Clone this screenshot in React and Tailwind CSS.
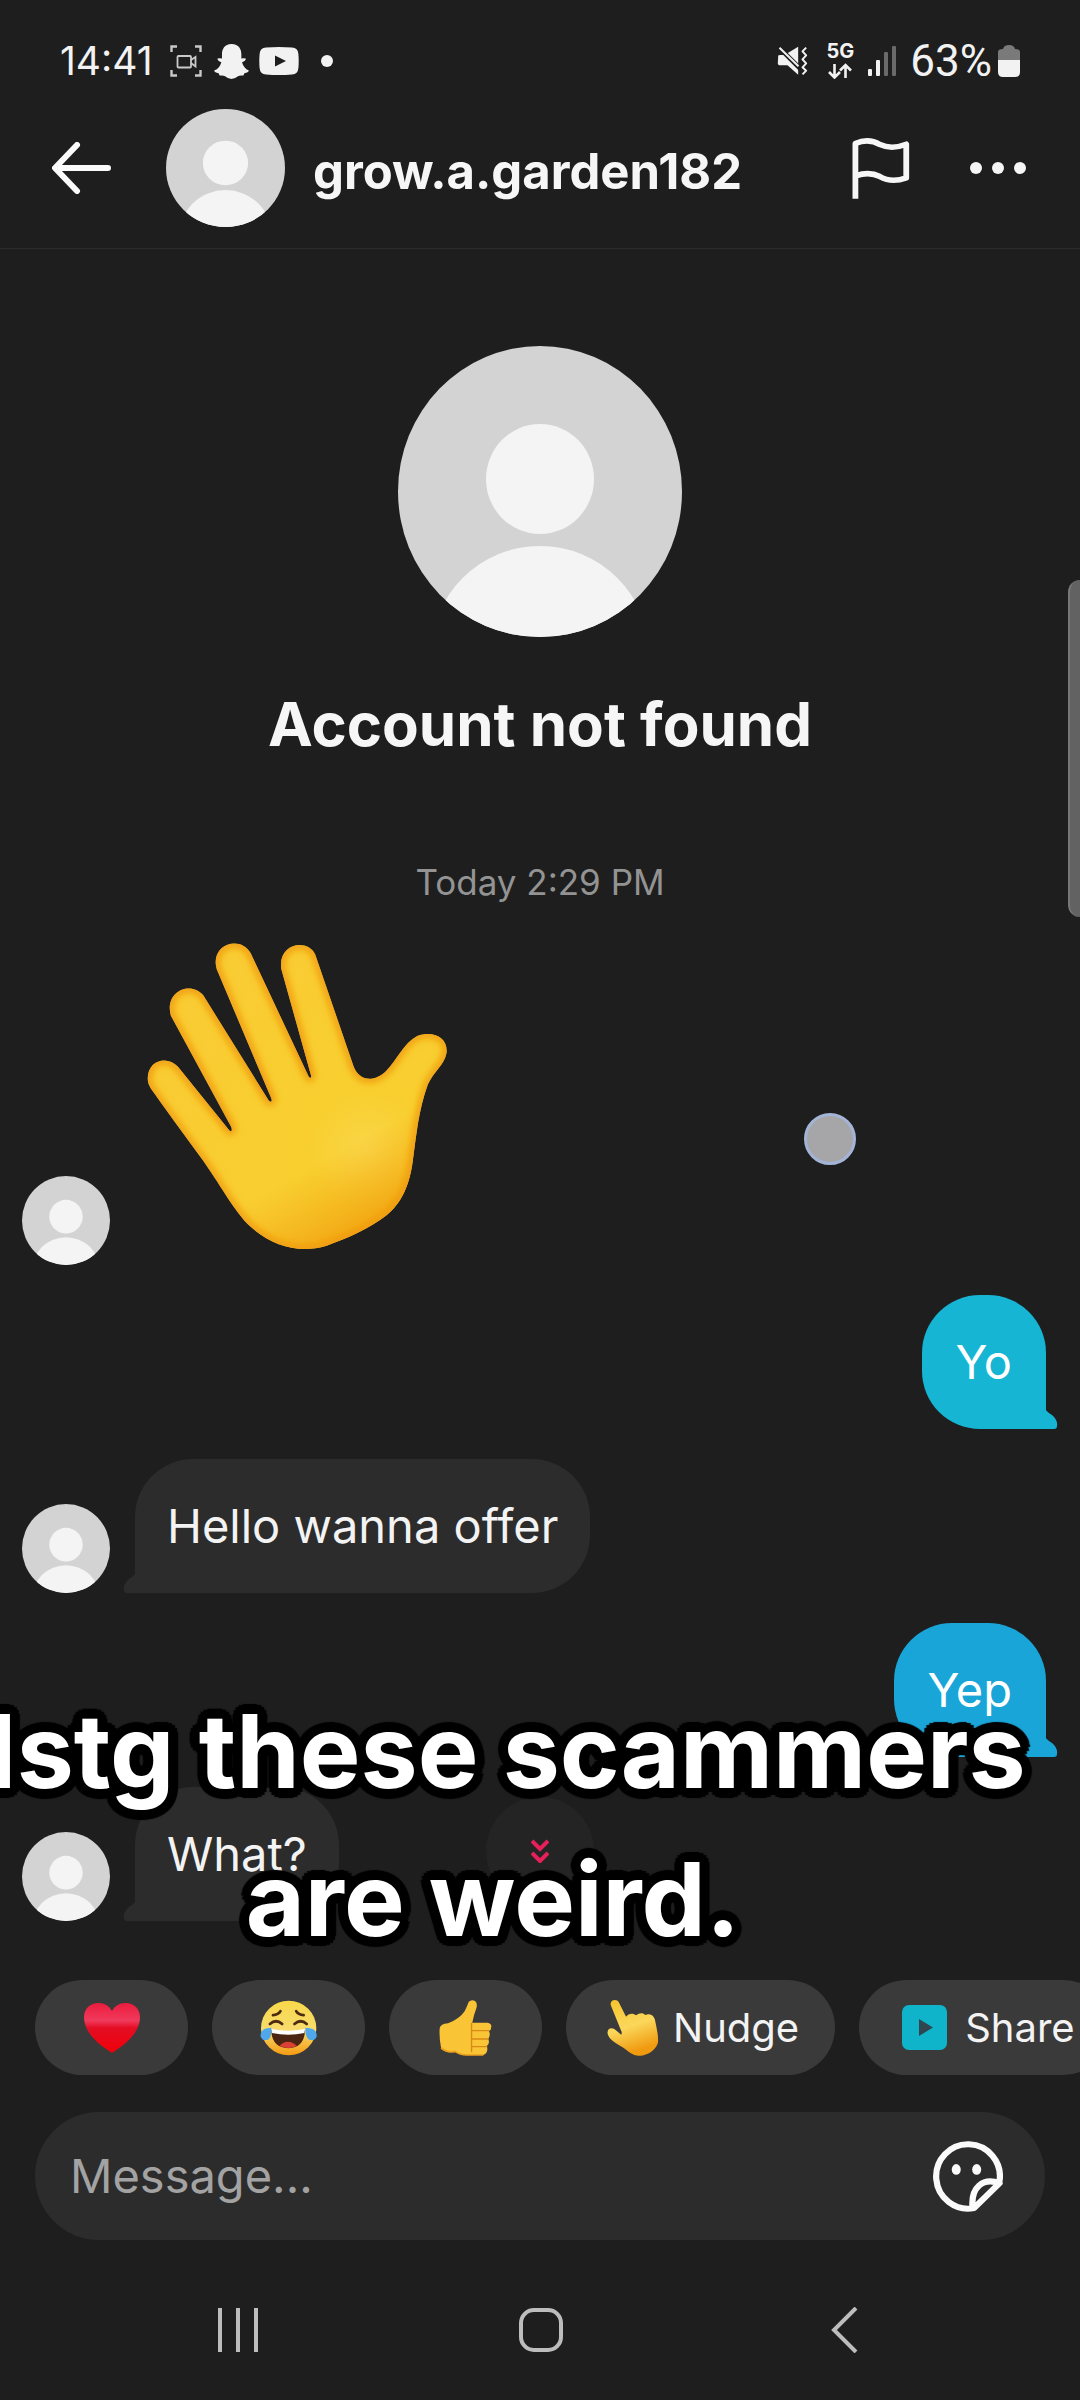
import React, { useState } from 'react';

const messages = [
  { id: 1, from: 'them', wave: true },
  { id: 2, from: 'me', text: 'Yo', bg: 'bg-[#16b5d3]', tail: 'text-[#16b5d3]' },
  { id: 3, from: 'them', text: 'Hello wanna offer' },
  { id: 4, from: 'me', text: 'Yep', bg: 'bg-[#1aa5d8]', tail: 'text-[#1aa5d8]' },
  { id: 5, from: 'them', text: 'What?' },
];

// Default grey profile picture
const Avatar = ({ className }) => (
  <svg viewBox="0 0 284 291" preserveAspectRatio="none" className={`shrink-0 rounded-[50%] bg-[#d3d3d3] ${className}`}>
    <ellipse cx="142" cy="133" rx="54" ry="55" fill="#f4f4f4" />
    <ellipse cx="142" cy="308" rx="109" ry="108" fill="#f4f4f4" />
  </svg>
);

const WaveHand = () => (
  <svg viewBox="405 64 936 922" className="h-[307px] w-[312px]" role="img" aria-label="Waving hand">
    <defs>
      <radialGradient id="palm" gradientUnits="userSpaceOnUse" cx="1100" cy="690" r="620">
        <stop offset="0" stopColor="#fad648" />
        <stop offset="0.28" stopColor="#f8cf2f" />
        <stop offset="1" stopColor="#f9cc33" />
      </radialGradient>
      <linearGradient id="heel" gradientUnits="userSpaceOnUse" x1="930" y1="740" x2="1080" y2="1000">
        <stop offset="0" stopColor="#f3a712" stopOpacity="0" />
        <stop offset="1" stopColor="#f09c0c" />
      </linearGradient>
      <filter id="soft" x="-10%" y="-10%" width="120%" height="120%">
        <feGaussianBlur stdDeviation="11" />
      </filter>
      <path
        id="hand"
        d="M443 480C438 420 500 402 533 438L688 630Q698 638 694 620L512 285C492 210 574 180 610 225L806 540Q818 550 814 534L650 146C628 70 722 42 752 98L926 468Q934 478 933 464L844 146C832 68 922 52 946 102L1060 435C1078 486 1125 484 1158 452C1192 418 1210 368 1252 346C1302 328 1346 352 1340 398C1334 432 1300 455 1284 492C1256 570 1250 640 1240 712C1230 800 1202 850 1160 885C1110 925 1040 955 980 976C900 1000 820 980 750 918C700 870 660 790 600 708C548 638 492 560 452 504Q444 492 443 480Z"
      />
      <clipPath id="handClip">
        <use href="#hand" />
      </clipPath>
    </defs>
    <use href="#hand" fill="url(#palm)" />
    <g clipPath="url(#handClip)">
      <use href="#hand" fill="url(#heel)" />
      <use href="#hand" fill="none" stroke="#f09a10" strokeWidth="22" filter="url(#soft)" />
    </g>
  </svg>
);

const Heart = () => (
  <svg viewBox="246 160 164 150" preserveAspectRatio="none" className="h-[50px] w-[56px]" aria-hidden="true">
    <defs>
      <linearGradient id="heartFill" x1="0" y1="0" x2="0" y2="1">
        <stop offset="0" stopColor="#ec1c3e" />
        <stop offset="0.35" stopColor="#f03a5c" />
        <stop offset="0.5" stopColor="#e40d24" />
        <stop offset="1" stopColor="#f00008" />
      </linearGradient>
    </defs>
    <path d="M328 310C290 285 246 250 246 203C246 155 308 145 328 184C348 145 410 155 410 203C410 250 366 285 328 310Z" fill="url(#heartFill)" />
  </svg>
);

const Laugh = () => (
  <svg viewBox="757 150 170 166" preserveAspectRatio="none" className="h-[56px] w-[58px]" aria-hidden="true">
    <defs>
      <linearGradient id="faceFill" x1="0" y1="0" x2="0" y2="1">
        <stop offset="0" stopColor="#f9d84a" />
        <stop offset="0.55" stopColor="#f8dc6e" />
        <stop offset="1" stopColor="#f59a12" />
      </linearGradient>
    </defs>
    <circle cx="841" cy="233" r="81" fill="url(#faceFill)" />
    <g fill="none" stroke="#4b2c12" strokeWidth="8" strokeLinecap="round">
      <path d="M795 195Q811 194 817 183" />
      <path d="M885 195Q869 194 863 183" />
      <path d="M786 221Q804 205 822 221" />
      <path d="M858 221Q876 205 894 221" />
    </g>
    <path d="M790 238Q840 248 889 238Q888 291 840 293Q791 291 790 238Z" fill="#4b2412" />
    <path d="M790 236Q840 246 889 236L887 248Q840 258 792 248Z" fill="#fff" />
    <path d="M814 286Q838 262 865 286Q840 298 814 286Z" fill="#dc4035" />
    <path d="M790 232Q757 232 759 258Q764 273 782 267Q792 258 790 232Z" fill="#4fa8ec" />
    <path d="M890 232Q925 232 923 258Q918 273 900 267Q889 258 890 232Z" fill="#4fa8ec" />
  </svg>
);

const ThumbUp = () => (
  <svg viewBox="1280 150 153 168" preserveAspectRatio="none" className="h-[56px] w-[53px]" aria-hidden="true">
    <path d="M1282 235Q1284 222 1306 220Q1338 208 1354 184Q1362 166 1366 155Q1374 147 1384 153Q1392 160 1388 174Q1380 196 1376 218H1420Q1432 220 1431 230Q1431 240 1424 243Q1430 256 1422 266Q1428 280 1418 288Q1424 308 1408 315H1360Q1340 314 1326 304Q1300 312 1286 294Q1280 262 1282 235Z" fill="#fac437" />
    <path d="M1374 220V305M1374 242H1424M1374 267H1422M1374 290H1418" fill="none" stroke="#d98a14" strokeWidth="4" strokeLinecap="round" />
    <path d="M1286 294Q1305 310 1326 304Q1340 314 1360 315H1408" fill="none" stroke="#eda11c" strokeWidth="5" />
  </svg>
);

const NudgeHand = () => (
  <svg viewBox="195 150 150 168" preserveAspectRatio="none" className="h-[56px] w-[52px]" aria-hidden="true">
    <defs>
      <linearGradient id="nudgeFill" x1="0" y1="0" x2="0.3" y2="1">
        <stop offset="0" stopColor="#f6c42c" />
        <stop offset="0.55" stopColor="#fbd75a" />
        <stop offset="1" stopColor="#f09a10" />
      </linearGradient>
    </defs>
    <path d="M206 166C202 148 224 146 229 157L250 200C257 190 270 188 279 196C288 187 300 188 305 195C318 188 330 196 333 208C337 230 344 255 342 278C336 300 312 316 290 317C268 318 258 305 240 292C220 280 202 268 198 255C192 238 206 230 217 238L236 254Q240 248 234 238Z" fill="url(#nudgeFill)" />
  </svg>
);

const StatusBar = () => (
  <div className="flex h-[104px] items-center justify-between pt-[18px] pr-[60px] pl-[60px] text-[#f2f2f2]">
    <div className="flex items-center">
      <span className="w-[110px] text-[39px] leading-[48px]">14:41</span>
      <svg viewBox="0 0 32 32" className="h-8 w-8" fill="none" stroke="#c9c9c9" strokeWidth="2.4">
        <path d="M1.5 7V1.5H7M25 1.5h5.500V7M30.500 25v5.500H25M7 30.500H1.500V25" />
        <rect x="7.500" y="11" width="13.500" height="11.500" rx="1" strokeWidth="1.800" />
        <path d="M21 15l4.500-3v9.500L21 18" strokeWidth="1.800" />
      </svg>
      <svg viewBox="619 134 102 103" className="ml-3 h-[35px] w-[35px]" fill="currentColor">
        <path d="M670 134C692 134 699 150 699 164V177Q706 175 712 177Q713 182 701 188C704 200 711 208 721 212Q720 218 708 220L705 227Q695 225 689 229Q670 245 651 229Q645 225 635 227L632 220Q620 218 619 212C631 208 637 200 640 188Q628 182 629 177Q635 175 642 177V164C642 150 649 134 670 134Z" />
      </svg>
      <svg viewBox="0 0 40 28" className="ml-[10px] h-7 w-10">
        <path d="M7 .6Q20-.6 33 .6Q39 1 39.400 7Q40 14 39.400 21Q39 27 33 27.500Q20 28.500 7 27.500Q1 27 .6 21Q0 14 .6 7Q1 1 7 .6Z" fill="currentColor" />
        <path d="M16 8.500L27 14L16 19.500Z" fill="#1e1e1e" />
      </svg>
      <span className="ml-[22px] h-3 w-3 rounded-full bg-current" />
    </div>
    <div className="flex items-center">
      <svg viewBox="682 138 90 90" className="h-[30px] w-[31px]">
        <path d="M684 170Q682 166 690 165H703L744 140V224L712 196H690Q682 195 683 188Z" fill="currentColor" />
        <path d="M684 140L750 206" stroke="#1e1e1e" strokeWidth="14" />
        <path d="M688 143L745 199" stroke="currentColor" strokeWidth="6" />
        <path d="M768 143L757 154L768 166L757 178L768 190L757 202L768 212L757 223" fill="none" stroke="currentColor" strokeWidth="6" strokeLinejoin="round" />
      </svg>
      <div className="ml-[18px] flex w-7 flex-col items-center">
        <span className="text-[20px] leading-4 font-bold">5G</span>
        <svg viewBox="0 0 26 16" className="mt-1 h-4 w-[26px]" fill="none" stroke="currentColor" strokeWidth="2.600">
          <path d="M7.500 1v13M2 9l5.500 5.500L13 9M18.500 15V2M13 7.500L18.500 2L24 7.500" />
        </svg>
      </div>
      <svg viewBox="0 0 28 30" className="ml-[14px] h-[30px] w-7" fill="currentColor">
        <rect x="0" y="23" width="4" height="7" rx="1" />
        <rect x="8" y="14" width="4" height="16" rx="1" />
        <rect x="16" y="6" width="4" height="24" rx="1" fill="#6a6a6a" />
        <rect x="24" y="0" width="4" height="30" rx="1" fill="#6a6a6a" />
      </svg>
      <span className="ml-[14px] font-[Roboto,sans-serif] text-[44px] leading-[48px]">63%</span>
      <svg viewBox="0 0 22 32" className="ml-[6px] h-8 w-[22px]">
        <path d="M0 15V7Q0 4 5 4Q6 0 11 0T17 4Q22 4 22 7V15Z" fill="#7a7a7a" />
        <path d="M0 15H22V27Q22 32 17 32H5Q0 32 0 27Z" fill="#f2f2f2" />
      </svg>
    </div>
  </div>
);

const Header = () => (
  <header className="flex items-center border-b border-[#2c2c2c] pt-[5px] pr-[54px] pb-[21px] pl-[52px]">
    <button type="button" aria-label="Back" className="shrink-0">
      <svg viewBox="0 0 60 52" className="h-[52px] w-[60px]" fill="none" stroke="#fafafa" strokeWidth="6" strokeLinecap="round" strokeLinejoin="round">
        <path d="M25 3L3 26L25 49M4 26H56" />
      </svg>
    </button>
    <Avatar className="ml-[54px] h-[118px] w-[119px]" />
    <h1 className="ml-[28px] flex-1 pt-[7px] text-[49px] leading-[60px] font-bold text-[#f6f6f6]">grow.a.garden182</h1>
    <button type="button" aria-label="Report" className="shrink-0">
      <svg viewBox="903 413 170 188" preserveAspectRatio="none" className="h-[62px] w-[58px]" fill="none" stroke="#f6f6f6" strokeWidth="17" strokeLinejoin="round">
        <path d="M913 600V433C940 420 962 422 985 436C1010 448 1035 446 1062 435V537C1035 547 1008 547 985 533C960 520 938 522 914 531" />
      </svg>
    </button>
    <button type="button" aria-label="More" className="ml-[60px] flex shrink-0 gap-[10px]">
      <span className="h-3 w-3 rounded-full bg-[#f6f6f6]" />
      <span className="h-3 w-3 rounded-full bg-[#f6f6f6]" />
      <span className="h-3 w-3 rounded-full bg-[#f6f6f6]" />
    </button>
  </header>
);

const Message = ({ msg }) => {
  if (msg.from === 'me') {
    return (
      <li className="flex justify-end pr-[34px]">
        <div className={`relative rounded-[58px] rounded-br-none px-[34px] py-[40px] text-[47px] leading-[54px] text-white ${msg.bg}`}>
          {msg.text}
          <svg viewBox="0 0 12 20" className={`absolute bottom-0 left-full h-5 w-3 ${msg.tail}`} fill="currentColor">
            <path d="M-1 0Q1 3 6 6Q12 11 11 17Q11 20 8 20H-1Z" />
          </svg>
        </div>
      </li>
    );
  }
  return (
    <li className="flex items-end gap-[25px] pl-[22px]">
      <Avatar className="h-[89px] w-[88px]" />
      {msg.wave ? (
        <div className="pb-4">
          <WaveHand />
        </div>
      ) : (
        <div className="relative rounded-[58px] rounded-bl-none bg-[#2c2c2c] px-8 py-[40px] text-[47px] leading-[54px] text-[#f3f3f3]">
          {msg.text}
          <svg viewBox="0 0 12 20" className="absolute right-full bottom-0 h-5 w-3 text-[#2c2c2c]" fill="currentColor">
            <path d="M13 0Q11 3 6 6Q0 11 1 17Q1 20 4 20H13Z" />
          </svg>
        </div>
      )}
    </li>
  );
};

const chip = 'flex h-[95px] shrink-0 items-center rounded-full bg-[#3a3a3a] text-[40px] leading-[48px] text-[#f3f3f3]';

const Composer = () => {
  const [text, setText] = useState('');

  return (
    <footer>
      <div className="flex gap-6 overflow-hidden pl-[35px]">
        <button type="button" aria-label="Send heart" className={`${chip} w-[153px] justify-center`}><Heart /></button>
        <button type="button" aria-label="Send laugh" className={`${chip} w-[153px] justify-center`}><Laugh /></button>
        <button type="button" aria-label="Send thumbs up" className={`${chip} w-[153px] justify-center`}><ThumbUp /></button>
        <button type="button" className={`${chip} gap-[14px] pr-[36px] pl-[41px]`}>
          <NudgeHand />
          Nudge
        </button>
        <button type="button" className={`${chip} gap-[18px] pr-[36px] pl-[43px]`}>
          <svg viewBox="0 0 45 45" className="h-[45px] w-[45px]">
            <rect width="45" height="45" rx="7" fill="#0fb4cb" />
            <path d="M17 14L31 22.500L17 31Z" fill="#2f4650" />
          </svg>
          Share
        </button>
      </div>
      <div className="mx-[35px] mt-[37px] mb-5 flex h-[128px] items-center rounded-full bg-[#2c2c2c] pr-[42px] pl-[35px]">
        <input
          type="text"
          aria-label="Message"
          placeholder="Message..."
          value={text}
          onChange={(e) => setText(e.target.value)}
          className="min-w-0 flex-1 bg-transparent text-[47px] leading-[54px] text-white outline-none placeholder:text-[#a3a3a3]"
        />
        <button type="button" aria-label="Stickers" className="shrink-0">
          <svg viewBox="1143 572 205 212" preserveAspectRatio="none" className="h-[71px] w-[71px]" fill="none" stroke="#fafafa" strokeWidth="18" strokeLinejoin="round">
            <path d="M1338 692A92 96 0 1 0 1265 772L1338 698C1290 680 1255 710 1260 770" />
            <ellipse cx="1213" cy="657" rx="13" ry="16" fill="#fafafa" stroke="none" />
            <ellipse cx="1272" cy="657" rx="13" ry="16" fill="#fafafa" stroke="none" />
          </svg>
        </button>
      </div>
    </footer>
  );
};

const NavBar = () => (
  <nav className="flex h-[140px] items-center justify-between pr-[214px] pl-[217px]">
    <button type="button" aria-label="Recents">
      <svg viewBox="0 0 42 44" className="h-11 w-[42px]" stroke="#bdbdbd" strokeWidth="4">
        <path d="M3 0V44M21 0V44M39 0V44" />
      </svg>
    </button>
    <button type="button" aria-label="Home">
      <svg viewBox="0 0 44 44" className="h-11 w-11" fill="none" stroke="#bdbdbd" strokeWidth="4">
        <rect x="2" y="2" width="40" height="40" rx="13" />
      </svg>
    </button>
    <button type="button" aria-label="Back">
      <svg viewBox="-8 0 43 46" className="h-[46px] w-[43px]" fill="none" stroke="#bdbdbd" strokeWidth="4">
        <path d="M25 1L3 23L25 45" />
      </svg>
    </button>
  </nav>
);

export default function App() {
  return (
    <div className="relative flex min-h-screen flex-col overflow-hidden bg-[#1e1e1e] font-[Inter,sans-serif]">
      <StatusBar />
      <Header />

      <main className="flex-1 pb-[58px]">
        <section className="flex flex-col items-center pt-[97px]">
          <Avatar className="h-[291px] w-[284px]" />
          <h2 className="mt-[51px] text-[60px] leading-[72px] font-bold text-[#f6f6f6]">Account not found</h2>
          <p className="mt-[102px] text-[35px] leading-[40px] text-[#939393]">Today 2:29 PM</p>
        </section>
        <ul className="mt-[40px] flex flex-col gap-[30px]">
          {messages.map((msg) => (
            <Message key={msg.id} msg={msg} />
          ))}
        </ul>
      </main>

      <Composer />
      <NavBar />

      {/* Scroll thumb */}
      <div className="absolute top-[580px] right-0 h-[337px] w-3 rounded-l-xl border-l-2 border-[#777] bg-[#626262]" />

      {/* Touch indicator */}
      <div className="absolute top-[1113px] left-[804px] h-[52px] w-[52px] rounded-full border-3 border-[#a3b4d6] bg-[#a6a6a8]" />

      <button type="button" aria-label="Scroll to latest" className="absolute top-[1797px] left-1/2 flex h-[108px] w-[108px] -translate-x-1/2 items-center justify-center rounded-full bg-[#242424]">
        <svg viewBox="0 0 18 24" className="h-6 w-[18px]" fill="none" stroke="#e8205a" strokeWidth="4">
          <path d="M1 2L9 10L17 2M1 14L9 22L17 14" />
        </svg>
      </button>

      {/* Video caption, outlined with a ring of shadows so the corners stay round */}
      <p className="absolute top-[1677px] -left-3 w-max text-center text-[102px] leading-[148px] font-bold text-white [text-shadow:10px_0_1px_#000,9px_4px_1px_#000,7px_7px_1px_#000,4px_9px_1px_#000,0_10px_1px_#000,-4px_9px_1px_#000,-7px_7px_1px_#000,-9px_4px_1px_#000,-10px_0_1px_#000,-9px_-4px_1px_#000,-7px_-7px_1px_#000,-4px_-9px_1px_#000,0_-10px_1px_#000,4px_-9px_1px_#000,7px_-7px_1px_#000,9px_-4px_1px_#000]">
        <span className="block">Istg these scammers</span>
        <span className="block pr-7">are weird.</span>
      </p>
    </div>
  );
}
